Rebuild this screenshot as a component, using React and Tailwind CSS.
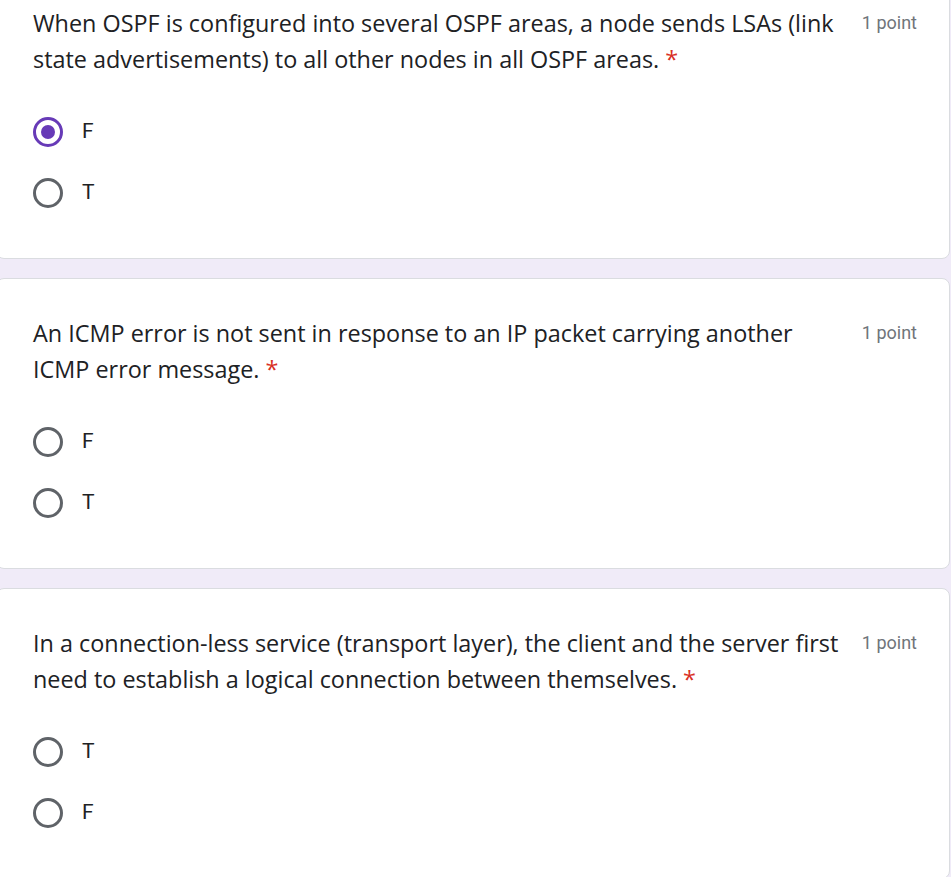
import React from 'react';

const questions = [
  {
    id: 1,
    title: 'When OSPF is configured into several OSPF areas, a node sends LSAs (link state advertisements) to all other nodes in all OSPF areas.',
    options: ['F', 'T'],
    selected: 'F',
  },
  {
    id: 2,
    title: 'An ICMP error is not sent in response to an IP packet carrying another ICMP error message.',
    options: ['F', 'T'],
    selected: null,
  },
  {
    id: 3,
    title: 'In a connection-less service (transport layer), the client and the server first need to establish a logical connection between themselves.',
    options: ['T', 'F'],
    selected: null,
  },
];

const Radio = ({ checked }) => (
  <span
    className={`flex items-center justify-center w-[30px] h-[30px] rounded-full border-[3px] ${
      checked ? 'border-[#673ab7]' : 'border-[#5f6368]'
    }`}
  >
    {checked && <span className="w-[14px] h-[14px] rounded-full bg-[#673ab7]" />}
  </span>
);

const QuestionCard = ({ question }) => {
  return (
    <div className="w-[954px] -ml-[4px] bg-white border border-[#dadce0] rounded-lg pl-[36px] pr-[32px] pt-[36px] pb-[35px]">
      {/* Title row */}
      <div className="flex items-start">
        <div className="w-[820px] text-[23.4px] leading-[36px] text-[#202124] font-['Open_Sans',sans-serif]">
          {question.title} <span className="text-[#d93025]">*</span>
        </div>
        <div className="ml-auto shrink-0 text-[18px] leading-[36px] text-[#70757a] font-['Roboto',sans-serif]">
          1 point
        </div>
      </div>

      {/* Options */}
      <div className="mt-[24px]">
        {question.options.map(opt => (
          <div key={opt} className="flex items-center h-[61px]">
            <Radio checked={question.selected === opt} />
            <span className="ml-[19px] text-[21px] text-[#202124] font-['Roboto',sans-serif]">{opt}</span>
          </div>
        ))}
      </div>
    </div>
  );
};

export default function App() {
  return (
    <div className="min-h-screen bg-[#f0ebf8] overflow-hidden">
      <div className="-mt-[32px] flex flex-col gap-[19px]">
        {questions.map(q => (
          <QuestionCard key={q.id} question={q} />
        ))}
      </div>
    </div>
  );
}
